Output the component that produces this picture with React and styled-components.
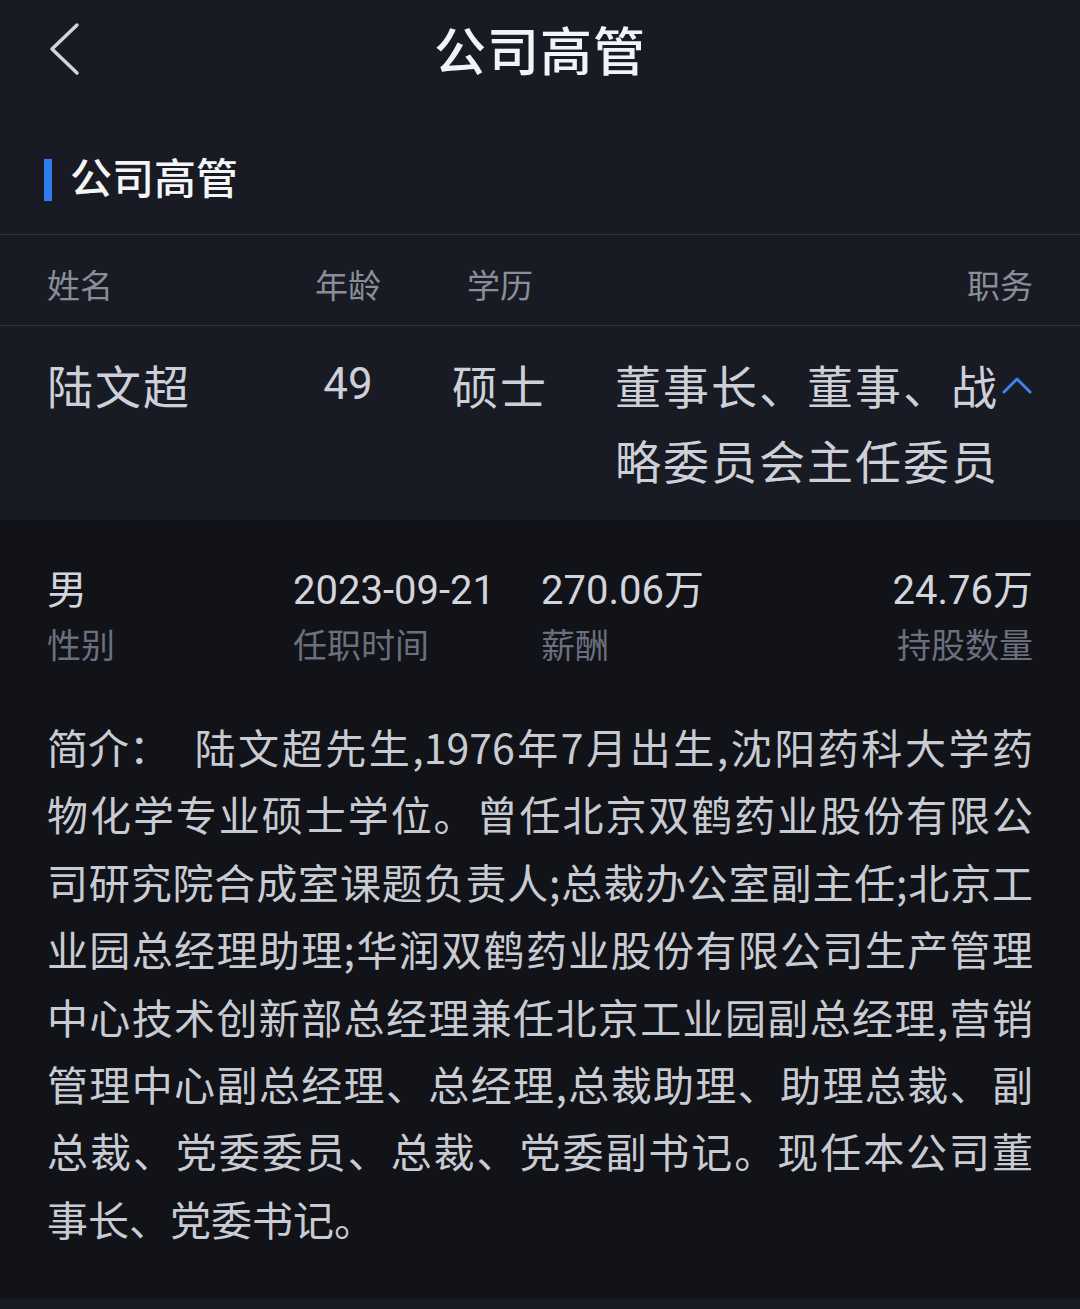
import React from 'react';
import styled, { createGlobalStyle } from 'styled-components';

const GlobalStyle = createGlobalStyle`
  html, body {
    margin: 0;
    padding: 0;
    background: #181b23;
  }
  body {
    font-family: "Noto Sans CJK SC", "Noto Sans", sans-serif;
  }
  * { box-sizing: border-box; }
`;

const Page = styled.div`
  width: 1080px;
  min-height: 1309px;
  background: #181b23;
  color: #c9ccd5;
`;

const NavBar = styled.div`
  height: 100px;
  display: flex;
  align-items: center;
  justify-content: center;
  position: relative;
`;

const BackButton = styled.div`
  position: absolute;
  left: 46px;
  top: 22px;
  width: 36px;
  height: 56px;
`;

const NavTitle = styled.h1`
  margin: 0 0 4px;
  font-size: 52px;
  font-weight: 500;
  color: #f2f3f6;
  letter-spacing: 1px;
`;

const SectionHead = styled.div`
  height: 135px;
  padding: 21px 0 0 44px;
  display: flex;
  align-items: center;
  gap: 18px;
  border-bottom: 1px solid #31343d;
`;

const Bar = styled.span`
  width: 8px;
  height: 42px;
  margin-top: 4px;
  background: #2f7cf0;
`;

const SectionTitle = styled.h2`
  margin: 0 0 4px;
  font-size: 42px;
  font-weight: 500;
  color: #f4f5f7;
`;

const Row = styled.div`
  display: grid;
  grid-template-columns: 243px 116px 188px 1fr;
  padding: 0 47px;
  align-items: ${p => (p.$head ? 'center' : 'start')};
  height: ${p => (p.$head ? '91px' : 'auto')};
  padding-top: ${p => (p.$head ? '8px' : '21px')};
  padding-bottom: ${p => (p.$head ? '0' : '23px')};
  border-bottom: ${p => (p.$head ? '1px solid #31343d' : 'none')};
`;

const HeadCell = styled.div`
  font-size: 33px;
  color: #8a8e99;
  text-align: ${p => p.$align || 'left'};
`;

const Cell = styled.div`
  font-size: ${p => p.$size || 46}px;
  letter-spacing: ${p => (p.$num ? 0 : 2)}px;
  line-height: 75px;
  color: #cdd0d9;
  font-family: ${p => (p.$num ? '"Roboto", "Noto Sans CJK SC", sans-serif' : 'inherit')};
  text-align: ${p => p.$align || 'left'};
`;

const PosCell = styled.div`
  display: flex;
  padding-left: 21px;
`;

const PosText = styled.div`
  flex: 1;
  font-size: 46px;
  letter-spacing: 2px;
  line-height: 75px;
  color: #cdd0d9;
`;

const Toggle = styled.svg`
  flex: none;
  margin-top: 29px;
`;

const Detail = styled.div`
  background: #111319;
  padding: 46px 47px 47px;
  margin-bottom: 9px;
`;

const Stats = styled.div`
  display: grid;
  grid-template-columns: 246px 248px 1fr auto;
`;

const Stat = styled.div`
  display: flex;
  flex-direction: column;
  gap: 6px;
  align-items: ${p => (p.$right ? 'flex-end' : 'flex-start')};
`;

const StatValue = styled.div`
  font-family: "Roboto", "Noto Sans CJK SC", sans-serif;
  font-size: 40px;
  line-height: 50px;
  color: #d3d5dd;
`;

const StatLabel = styled.div`
  font-size: 34px;
  line-height: 44px;
  color: #6b707e;
`;

const Intro = styled.div`
  margin-top: 47px;
  font-size: 41px;
  line-height: 67.4px;
  color: #c9cbd3;
`;

const Line = styled.div`
  text-align: justify;
  text-align-last: ${p => (p.$last ? 'left' : 'justify')};
  white-space: nowrap;
`;

const IntroLabel = styled.span`
  display: inline-block;
  width: 145px;
  text-align: left;
  text-align-last: left;
`;

const stats = [
  { value: '男', label: '性别' },
  { value: '2023-09-21', label: '任职时间' },
  { value: '270.06万', label: '薪酬' },
  { value: '24.76万', label: '持股数量', right: true },
];

const introLines = [
  '物化学专业硕士学位。曾任北京双鹤药业股份有限公',
  '司研究院合成室课题负责人;总裁办公室副主任;北京工',
  '业园总经理助理;华润双鹤药业股份有限公司生产管理',
  '中心技术创新部总经理兼任北京工业园副总经理,营销',
  '管理中心副总经理、总经理,总裁助理、助理总裁、副',
  '总裁、党委委员、总裁、党委副书记。现任本公司董',
  '事长、党委书记。',
];

export default function App() {
  return (
    <Page>
      <GlobalStyle />
      <NavBar>
        <BackButton>
          <svg width="36" height="56" viewBox="0 0 36 56">
            <path d="M31 3 L6 27 L31 51" fill="none" stroke="#d2d4da" strokeWidth="3.5" strokeLinecap="round" strokeLinejoin="round" />
          </svg>
        </BackButton>
        <NavTitle>公司高管</NavTitle>
      </NavBar>

      <SectionHead>
        <Bar />
        <SectionTitle>公司高管</SectionTitle>
      </SectionHead>

      <Row $head>
        <HeadCell>姓名</HeadCell>
        <HeadCell $align="center">年龄</HeadCell>
        <HeadCell $align="center">学历</HeadCell>
        <HeadCell $align="right">职务</HeadCell>
      </Row>

      <Row>
        <Cell>陆文超</Cell>
        <Cell $num $size={44} $align="center">49</Cell>
        <Cell $align="center">硕士</Cell>
        <PosCell>
          <PosText>董事长、董事、战略委员会主任委员</PosText>
          <Toggle width="32" height="18" viewBox="0 0 32 18">
            <path d="M3 16 L16 3 L29 16" fill="none" stroke="#3a84ee" strokeWidth="3" strokeLinecap="round" strokeLinejoin="round" />
          </Toggle>
        </PosCell>
      </Row>

      <Detail>
        <Stats>
          {stats.map(s => (
            <Stat key={s.label} $right={s.right}>
              <StatValue>{s.value}</StatValue>
              <StatLabel>{s.label}</StatLabel>
            </Stat>
          ))}
        </Stats>
        <Intro>
          <Line>
            <IntroLabel>简介：</IntroLabel>陆文超先生,1976年7月出生,沈阳药科大学药
          </Line>
          {introLines.map((l, i) => (
            <Line key={i} $last={i === introLines.length - 1}>{l}</Line>
          ))}
        </Intro>
      </Detail>
    </Page>
  );
}
